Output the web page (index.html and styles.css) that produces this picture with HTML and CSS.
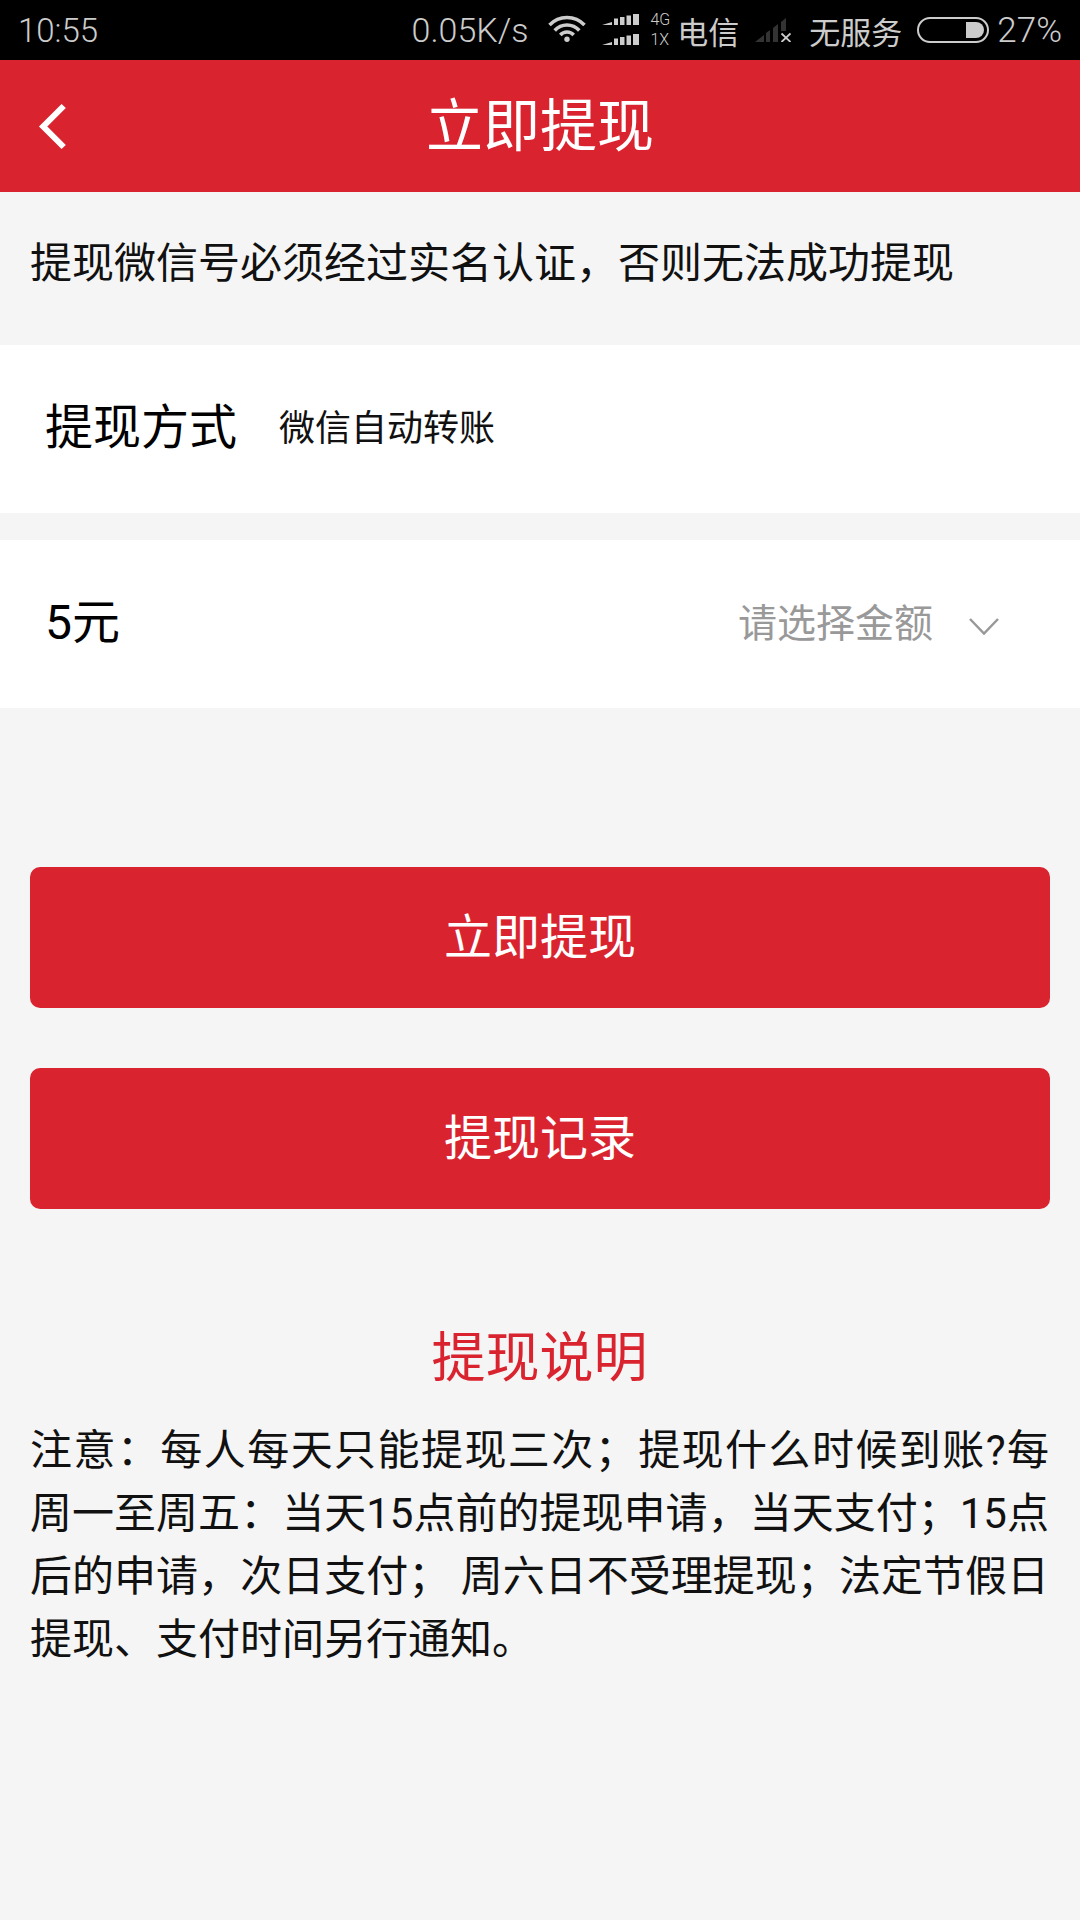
FILE: index.html
```html
<!DOCTYPE html>
<html>
    <head>
        <title>立即提现</title>
        <meta charset="UTF-8">
        <link rel="stylesheet" href="styles.css">
    </head>
    <body>
        <div class="status">
            <span class="time">10:55</span>
            <div class="status-right">
                <span class="speed">0.05K/s</span>
                <svg class="wifi" width="38" height="27" viewBox="0 0 38 27">
                    <path d="M1.500 10 A24 24 0 0 1 36.500 10" fill="none" stroke="#ccc" stroke-width="3.500"/>
                    <path d="M6.700 15.500 A16.500 16.500 0 0 1 31.300 15.500" fill="none" stroke="#ccc" stroke-width="3.500"/>
                    <path d="M12.300 20 A9 9 0 0 1 25.700 20" fill="none" stroke="#ccc" stroke-width="3.500"/>
                    <circle cx="19" cy="24.300" r="2.700" fill="#ccc"/>
                </svg>
                <svg class="signal" width="37" height="31" viewBox="0 0 37 31">
                    <path d="M0 11L10 8V11ZM12 4.500h4V11h-4zM18 3h4.500v8H18zM24.500 1.500H29V11h-4.500zM31 0h6v11h-6z" fill="#ccc"/>
                    <path d="M0 31L10 28V31ZM12 24.500h4V31h-4zM18 23h4.500v8H18zM24.500 21.500H29V31h-4.500zM31 20h6v11h-6z" fill="#ccc"/>
                </svg>
                <div class="net"><span>4G</span><span>1X</span></div>
                <span class="carrier">电信</span>
                <svg class="nosignal" width="36" height="24" viewBox="0 0 36 24">
                    <path d="M0 24L9 17V24ZM11 15l4-3V24h-4zM18 10l5-4V24h-5zM26 4l5-4V13h-5z" fill="#333"/>
                    <path d="M26.500 15.500l9 8.500M35.500 15.500l-9 8.500" stroke="#ccc" stroke-width="1.800" fill="none"/>
                </svg>
                <span class="carrier">无服务</span>
                <div class="battery"><div class="battery-fill"></div></div>
                <span class="percent">27%</span>
            </div>
        </div>
        <div class="head">
            <svg class="back" width="30" height="48" viewBox="0 0 30 48">
                <path d="M26.700 4 L6.200 24.500 L26.700 45" fill="none" stroke="#fff" stroke-width="6"/>
            </svg>
            <span>立即提现</span>
        </div>
        <div class="notice">提现微信号必须经过实名认证，否则无法成功提现</div>
        <div class="row way">
            <span class="label">提现方式</span>
            <span class="way-value">微信自动转账</span>
        </div>
        <div class="row money">
            <span class="label">5元</span>
            <span class="pick">请选择金额</span>
            <svg class="arrow" width="30" height="17" viewBox="0 0 30 17">
                <path d="M1 1 L15 15.500 L29 1" fill="none" stroke="#999" stroke-width="2.500"/>
            </svg>
        </div>
        <div class="btns">
            <div class="btn">立即提现</div>
            <div class="btn">提现记录</div>
        </div>
        <div class="explain">
            <div class="explain-title">提现说明</div>
            <p>注意：每人每天只能提现三次；提现什么时候到账?每周一至周五：当天15点前的提现申请，当天支付；15点后的申请，次日支付； 周六日不受理提现；法定节假日提现、支付时间另行通知。</p>
        </div>
    </body>
</html>
```

FILE: styles.css
```css
body{
    margin: 0;
    width: 1080px;
    height: 1920px;
    background: #f5f5f5;
    font-family: "Roboto", "Noto Sans CJK SC", sans-serif;
    color: #111;
    overflow: hidden;
}
.status{
    height: 60px;
    background: #000;
    color: #ccc;
    padding: 0 18px;
    display: flex;
    justify-content: space-between;
    align-items: center;
    font-size: 33px;
    font-weight: 300;
}
.status-right{
    display: flex;
    align-items: center;
}
.speed{
    font-size: 34px;
    margin-right: 20px;
}
.percent{
    font-size: 35px;
}
.wifi{
    margin: 0 16px 3px 0;
}
.signal{
    margin: 0 11px 1px 0;
}
.net{
    display: flex;
    flex-direction: column;
    font-size: 16px;
    line-height: 20px;
    margin-right: 7px;
}
.carrier{
    font-size: 31px;
    font-weight: 400;
}
.nosignal{
    margin: 0 18px 0 16px;
}
.battery{
    width: 72px;
    height: 26px;
    box-sizing: border-box;
    border: 2px solid #ccc;
    border-radius: 13px;
    margin: 0 8px 0 15px;
    padding: 3px;
    display: flex;
    justify-content: flex-end;
}
.battery-fill{
    width: 18px;
    background: #ccc;
    border-radius: 0 8px 8px 0;
}
.head{
    height: 132px;
    box-sizing: border-box;
    padding-bottom: 10px;
    background: #d92430;
    color: #fff;
    font-size: 57px;
    display: flex;
    justify-content: center;
    align-items: center;
    position: relative;
}
.back{
    position: absolute;
    left: 37px;
    top: 42px;
}
.notice{
    height: 153px;
    box-sizing: border-box;
    padding: 0 30px 18px;
    display: flex;
    align-items: center;
    font-size: 42px;
}
.row{
    height: 168px;
    box-sizing: border-box;
    background: #fff;
    padding: 0 81px 9px 45px;
    display: flex;
    align-items: center;
}
.way{
    margin-bottom: 27px;
}
.label{
    font-size: 48px;
    color: #000;
    margin-bottom: 4px;
}
.way-value{
    font-size: 36px;
    margin-left: 42px;
}
.pick{
    font-size: 39px;
    color: #999;
    margin-left: auto;
}
.arrow{
    margin: 14px 0 0 36px;
}
.btns{
    padding: 159px 30px 0;
    display: flex;
    flex-direction: column;
    gap: 60px;
}
.btn{
    height: 141px;
    box-sizing: border-box;
    padding-bottom: 10px;
    background: #d92430;
    border-radius: 10px;
    color: #fff;
    font-size: 48px;
    display: flex;
    justify-content: center;
    align-items: center;
}
.explain{
    padding: 115px 31px 0 30px;
}
.explain-title{
    color: #d92430;
    font-size: 54px;
    line-height: 70px;
    text-align: center;
}
.explain p{
    margin: 25px 0 0;
    font-size: 42px;
    line-height: 63px;
    text-align: justify;
}
```
